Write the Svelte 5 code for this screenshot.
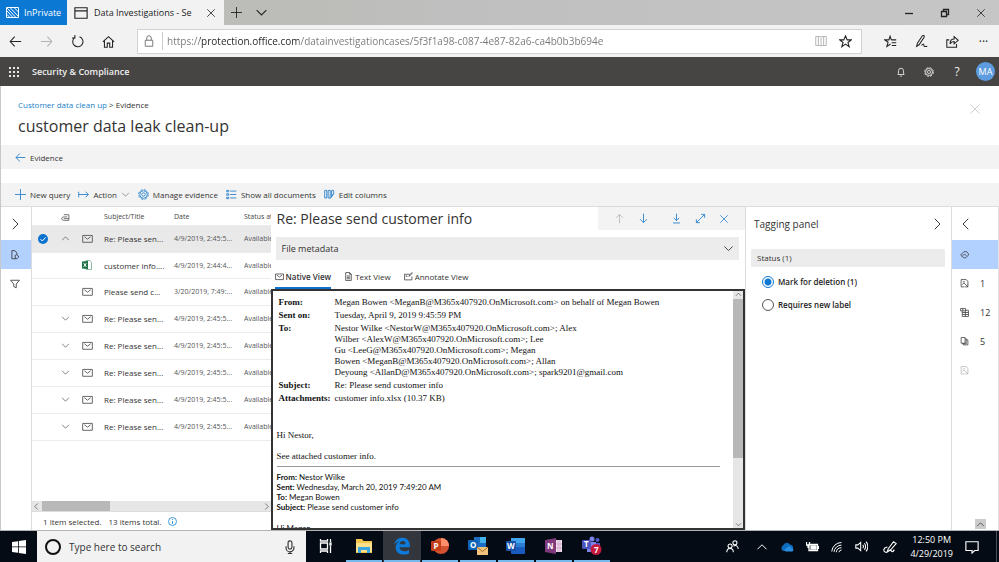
<script lang="ts">
	type Doc = {
		kind: 'mail' | 'excel';
		subject: string;
		date: string;
		expand?: 'up' | 'down';
	};

	const docs: Doc[] = [
		{ kind: 'mail', subject: 'Re: Please sen...', date: '4/9/2019, 2:45:5...', expand: 'up' },
		{ kind: 'excel', subject: 'customer info....', date: '4/9/2019, 2:44:4...' },
		{ kind: 'mail', subject: 'Please send c...', date: '3/20/2019, 7:49:...' },
		{ kind: 'mail', subject: 'Re: Please sen...', date: '4/9/2019, 2:45:5...', expand: 'down' },
		{ kind: 'mail', subject: 'Re: Please sen...', date: '4/9/2019, 2:45:5...', expand: 'down' },
		{ kind: 'mail', subject: 'Re: Please sen...', date: '4/9/2019, 2:45:5...', expand: 'down' },
		{ kind: 'mail', subject: 'Re: Please sen...', date: '4/9/2019, 2:45:5...', expand: 'down' },
		{ kind: 'mail', subject: 'Re: Please sen...', date: '4/9/2019, 2:45:5...', expand: 'down' }
	];

	const recipients = [
		'Nestor Wilke <NestorW@M365x407920.OnMicrosoft.com>; Alex',
		'Wilber <AlexW@M365x407920.OnMicrosoft.com>; Lee',
		'Gu <LeeG@M365x407920.OnMicrosoft.com>; Megan',
		'Bowen <MeganB@M365x407920.OnMicrosoft.com>; Allan',
		'Deyoung <AllanD@M365x407920.OnMicrosoft.com>; spark9201@gmail.com'
	];

	const views = [
		{ id: 'native', label: 'Native View', icon: 'mail' },
		{ id: 'text', label: 'Text View', icon: 'page' },
		{ id: 'annotate', label: 'Annotate View', icon: 'annotate' }
	];

	const panels = [
		{ id: 'tags', label: 'Tagging', icon: 'tag', count: '' },
		{ id: 'near', label: 'Searches', icon: 'inbox', count: '1' },
		{ id: 'family', label: 'Family', icon: 'tree', count: '12' },
		{ id: 'dupes', label: 'Duplicates', icon: 'copies', count: '5' },
		{ id: 'errors', label: 'Errors', icon: 'inbox', count: '' }
	];

	const tags = [
		{ id: 'deletion', label: 'Mark for deletion (1)' },
		{ id: 'label', label: 'Requires new label' }
	];

	// 16x16 outline icons
	const icons: Record<string, string> = {
		left: 'M15 8H1.5M7 2 1.5 8 7 14',
		right: 'M1 8h13.5M9 2l5.5 6L9 14',
		up: 'M8 15V2M3 7l5-5 5 5',
		down: 'M8 1v13M3 9l5 5 5-5',
		download: 'M8 1v10M4 7l4 4 4-4M3 14.5h10',
		diagonal: 'M2 14 14 2M9 2h5v5M2 9v5h5',
		close: 'M2 2l12 12M14 2 2 14',
		plus: 'M8 0v16M0 8h16',
		chevDown: 'M2 5l6 6 6-6',
		chevUp: 'M2 11l6-6 6 6',
		chevLeft: 'M11 1 4 8l7 7',
		chevRight: 'M5 1l7 7-7 7',
		reload: 'M4.5 3.2A6.3 6.3 0 1 0 10.5 2.2M4.8 0v3.6H1.2',
		home: 'M1 8.5 8 2l7 6.5M3 7v8h3.5v-5h3v5H13V7',
		lock: 'M3 7h10v8H3zM5 7V4a3 3 0 0 1 6 0v3',
		tab: 'M1 2h14v12H1zM1 5.5h14',
		book: 'M1 2h6l1 1 1-1h6v12H9l-1 1-1-1H1zM8 3v12M4.5 2v12M11.5 2v12',
		star: 'M8 1l2 5h5l-4 3.3 1.6 5.2L8 11.3l-4.6 3.2L5 9.3 1 6h5z',
		favs: 'M9 6 7.5 1.5 6 6H1l4 3-1.5 5L8 11M9 6h6M9.5 9.5H15M9.5 13H15',
		pen: 'M2 14l1-4 6-9c2-1 3 0 2 2l-6 9-3 2zM8 13c2-3 3-2 3 0s2 1 4 1',
		share: 'M4 6H1v9h12v-4M5 11c0-4 2-6 5-6V2l5 4.5L10 11V8c-2 0-4 1-5 3z',
		bell: 'M3 12c1-1 1-3 1-6a4 4 0 0 1 8 0c0 3 0 5 1 6zM6.5 14.5h3',
		action: 'M1 4v8M1 8h14M11 4l4 4-4 4',
		list: 'M1 2h3v2H1zM1 7h3v2H1zM1 12h3v2H1zM6 3h9M6 8h9M6 13h9',
		columns: 'M1 2h3v11H1zM6 2h3v11H6zM11 2h3v5l-3 4zM9 14l5-7',
		mail: 'M1 3.5h14v10H1zM3.5 5.5 8 9l4.5-3.5',
		page: 'M3 1h7l3 3v11H3zM10 1v3h3M5 7h6M5 9.5h6M5 12h6',
		annotate: 'M10 4H1v10h13V8M4 6v2h2M9 8l1-3 4-4 1 1-4 4z',
		clip: 'M5 3h9v10H5c-5 0-5-6 0-6h6M5 10h9',
		docFind: 'M9 14H3V1h5l3 4v2M8 9l3-2 3 4-3 3H9z',
		filter: 'M1 2h14L10 8v6l-4-2V8z',
		tag: 'M1 9 7 3h5l3 4v2l-5 5H7zM4 11l4-4 4 4',
		inbox: 'M14 10V4L11 1H2v13h6M5 5h4M4 10l3-3 7 7M9 14h5V9',
		tree: 'M1 1h9v4H1zM4 5v10h11V4h-5M4 8h11M4 11.5h11M9.5 5v10M5 1v4',
		copies: 'M2 1h7v10H2zM9 3h2v9H4M11 5h3v9H6v-2',
		mic: 'M8 1a2.2 2.2 0 0 0-2.2 2.2v5a2.2 2.2 0 0 0 4.4 0v-5A2.2 2.2 0 0 0 8 1zM3.5 7v2a4.5 4.5 0 0 0 9 0V7M8 13v2.5M5.5 15.5h5',
		people: 'M11 1a2.5 2.5 0 1 0 0 5 2.5 2.5 0 0 0 0-5zM5 5a2.5 2.5 0 1 0 0 5 2.5 2.5 0 0 0 0-5zM1 15c0-3 2-4.5 4-4.5S9 12 9 15M9 7.5c3-2 6 0 6 3.5',
		wifi: 'M1 14A13 13 0 0 1 14 2M4 14.5A10 10 0 0 1 14 5.5M7 15a7 7 0 0 1 7-6M10.5 15a4 4 0 0 1 3.5-3',
		speaker: 'M1 6h2.5L7 3v10l-3.5-3H1zM9.5 6c1 1 1 3 0 4M11.5 4c2 2 2 6 0 8M13.5 2c3 3 3 9 0 12',
		ink: 'M6 10l6-8 3 2-7 8-3 1zM5 8c-5 1-5 5-2 6s4-4 6-2 2 2 4-1',
		note: 'M1 2h14v10h-4l-3 3v-3H1z'
	};

	let activeView = $state('native');
	let activePanel = $state('tags');
	let selectedTag = $state('deletion');
	let selectedRow = $state(0);
	let address = $state(
		'https://protection.office.com/datainvestigationcases/5f3f1a98-c087-4e87-82a6-ca4b0b3b694e'
	);
	let search = $state('');
</script>

{#snippet icon(name: string, size = 11)}
	<svg class="icon" width={size} height={size} viewBox="0 0 16 16" aria-hidden="true">
		<path d={icons[name]} />
	</svg>
{/snippet}

{#snippet gear(size = 11)}
	<svg class="icon" width={size} height={size} viewBox="0 0 16 16" aria-hidden="true">
		<circle cx="8" cy="8" r="7" stroke-dasharray="3.5 2" />
		<circle cx="8" cy="8" r="5.5" />
		<circle cx="8" cy="8" r="2.5" />
	</svg>
{/snippet}

<div class="desktop">
	<div class="tabs">
		<span class="inprivate">
			<svg width="13" height="11" viewBox="0 0 13 11" aria-hidden="true">
				<path class="line" d="M.5.5h12v10H.5zM1 4l6 6.5M1 1l9 9.5M4 .5l8.5 9M8 .5 12.5 5M1 7.5l3 3" />
			</svg>
			InPrivate
		</span>
		<div class="tab">
			{@render icon('tab', 14)}
			<span class="tab-title">Data Investigations - Se</span>
			<button type="button" aria-label="Close tab">{@render icon('close', 10)}</button>
		</div>
		<button type="button" class="tab-tool" aria-label="New tab">{@render icon('plus', 11)}</button>
		<button type="button" class="tab-tool" aria-label="Tab list">{@render icon('chevDown', 13)}</button>
		<div class="window-buttons">
			<button type="button" aria-label="Minimize">
				<svg class="icon" width="10" height="10" viewBox="0 0 10 10"><path d="M1 5.5h8" /></svg>
			</button>
			<button type="button" aria-label="Restore">
				<svg class="icon" width="10" height="10" viewBox="0 0 10 10">
					<path d="M1.5 3.5h5v5h-5zM3.5 3V1.5h5v5H7" />
				</svg>
			</button>
			<button type="button" aria-label="Close">{@render icon('close', 10)}</button>
		</div>
	</div>

	<div class="navbar">
		<div class="nav-buttons">
			<button type="button" aria-label="Back">{@render icon('left', 13)}</button>
			<button type="button" aria-label="Forward" class="faded">{@render icon('right', 13)}</button>
			<button type="button" aria-label="Refresh">{@render icon('reload', 13)}</button>
			<button type="button" aria-label="Home">{@render icon('home', 13)}</button>
		</div>
		<div class="address">
			<span class="lock">{@render icon('lock', 12)}</span>
			<input type="text" aria-label="Address" bind:value={address} />
			<button type="button" aria-label="Reading view" class="faded">{@render icon('book', 12)}</button>
			<button type="button" aria-label="Add to favorites">{@render icon('star', 13)}</button>
		</div>
		<div class="nav-buttons end">
			<button type="button" aria-label="Favorites">{@render icon('favs', 13)}</button>
			<button type="button" aria-label="Add notes">{@render icon('pen', 13)}</button>
			<button type="button" aria-label="Share">{@render icon('share', 13)}</button>
			<button type="button" aria-label="More" class="more">···</button>
		</div>
	</div>

	<header class="suite">
		<button type="button" aria-label="App launcher">
			<svg width="10" height="10" viewBox="0 0 10 10" aria-hidden="true">
				{#each [0, 4, 8] as y}
					{#each [0, 4, 8] as x}
						<rect {x} {y} width="2" height="2" fill="#e6e6e6" />
					{/each}
				{/each}
			</svg>
		</button>
		<span class="suite-name">Security &amp; Compliance</span>
		<button type="button" aria-label="Notifications">{@render icon('bell', 10)}</button>
		<button type="button" aria-label="Settings">{@render gear(10)}</button>
		<button type="button" aria-label="Help" class="help">?</button>
		<button type="button" class="avatar">MA</button>
	</header>

	<main class="page">
		<div class="page-head">
			<div>
				<nav class="crumbs"><a href="#cases">Customer data clean up</a> &gt; Evidence</nav>
				<h1>customer data leak clean-up</h1>
			</div>
			<button type="button" class="dismiss" aria-label="Close case">{@render icon('close', 12)}</button>
		</div>

		<a class="bar back" href="#evidence">{@render icon('left')} <span>Evidence</span></a>

		<div class="bar commands">
			<button type="button">{@render icon('plus')} New query</button>
			<button type="button">{@render icon('action')} Action <span class="caret">{@render icon('chevDown', 9)}</span></button>
			<button type="button">{@render gear(11)} Manage evidence</button>
			<button type="button">{@render icon('list')} Show all documents</button>
			<button type="button">{@render icon('columns')} Edit columns</button>
		</div>

		<div class="workspace">
			<aside class="rail">
				<button type="button" aria-label="Expand">{@render icon('chevRight', 12)}</button>
				<button type="button" aria-label="Documents" class="active">{@render icon('docFind', 10)}</button>
				<button type="button" aria-label="Filters">{@render icon('filter', 10)}</button>
			</aside>

			<section class="list">
				<div class="grid">
					<table>
						<colgroup>
							<col class="c-check" />
							<col class="c-expand" />
							<col class="c-icon" />
							<col class="c-text" />
							<col class="c-text" />
							<col />
						</colgroup>
						<thead>
							<tr>
								<th></th>
								<th class="mid">{@render icon('clip', 9)}</th>
								<th></th>
								<th>Subject/Title</th>
								<th>Date</th>
								<th>Status at</th>
							</tr>
						</thead>
						<tbody>
							{#each docs as doc, i}
								<tr class:selected={i === selectedRow} class={doc.kind} onclick={() => (selectedRow = i)}>
									<td class="mid">
										{#if i === selectedRow}
											<svg width="10" height="10" viewBox="0 0 10 10">
												<circle cx="5" cy="5" r="5" fill="#0b72d0" />
												<path d="M2.5 5.2 4.3 7l3.3-3.6" fill="none" stroke="#fff" />
											</svg>
										{/if}
									</td>
									<td class="mid">
										{#if doc.expand}
											{@render icon(doc.expand === 'up' ? 'chevUp' : 'chevDown', 9)}
										{/if}
									</td>
									<td class="kind">
										{#if doc.kind === 'mail'}
											{@render icon('mail', 11)}
										{:else}
											<svg width="10" height="10" viewBox="0 0 10 10">
												<path d="M4 .5h4l1.5 2v7H4z" fill="#fff" stroke="#8fb8a0" />
												<path d="M0 1.5 6 1v8L0 8.5z" fill="#1e7145" />
												<path d="M1.7 3.2l2.6 3.6M4.3 3.2 1.7 6.8" stroke="#fff" fill="none" />
											</svg>
										{/if}
									</td>
									<td class="subject">{doc.subject}</td>
									<td>{doc.date}</td>
									<td>Available</td>
								</tr>
							{/each}
						</tbody>
					</table>
				</div>
				<div class="hscroll">
					{@render icon('chevLeft', 7)}
					<div class="track"><div class="thumb"></div></div>
					{@render icon('chevRight', 7)}
				</div>
				<p class="totals">
					<span>1 item selected.</span>
					<span>13 items total.</span>
					<svg class="info" width="9" height="9" viewBox="0 0 9 9">
						<circle cx="4.5" cy="4.5" r="4" />
						<path d="M4.5 4v3M4.5 2v1" />
					</svg>
				</p>
			</section>

			<section class="viewer">
				<div class="viewer-head">
					<h2>Re: Please send customer info</h2>
					<div class="viewer-tools">
						<button type="button" aria-label="Previous" disabled>{@render icon('up')}</button>
						<button type="button" aria-label="Next">{@render icon('down')}</button>
						<button type="button" aria-label="Download" class="apart">{@render icon('download')}</button>
						<button type="button" aria-label="Full screen">{@render icon('diagonal')}</button>
						<button type="button" aria-label="Close">{@render icon('close', 10)}</button>
					</div>
				</div>
				<button type="button" class="metadata">File metadata {@render icon('chevDown', 11)}</button>
				<div class="views" role="tablist">
					{#each views as view}
						<button
							type="button"
							role="tab"
							aria-selected={activeView === view.id}
							class:active={activeView === view.id}
							onclick={() => (activeView = view.id)}
						>
							{@render icon(view.icon, 9)}
							{view.label}
						</button>
					{/each}
				</div>
				<div class="message">
					<div class="message-body">
						<table class="headers">
							<tbody>
								<tr><th>From:</th><td>Megan Bowen &lt;MeganB@M365x407920.OnMicrosoft.com&gt; on behalf of Megan Bowen</td></tr>
								<tr><th>Sent on:</th><td>Tuesday, April 9, 2019 9:45:59 PM</td></tr>
								<tr>
									<th>To:</th>
									<td>{#each recipients as line}<div>{line}</div>{/each}</td>
								</tr>
								<tr><th>Subject:</th><td>Re: Please send customer info</td></tr>
								<tr><th>Attachments:</th><td>customer info.xlsx (10.37 KB)</td></tr>
							</tbody>
						</table>
						<p class="greeting">Hi Nestor,</p>
						<p>See attached customer info.</p>
						<hr />
						<div class="quoted">
							<b>From:</b> Nestor Wilke<br />
							<b>Sent:</b> Wednesday, March 20, 2019 7:49:20 AM<br />
							<b>To:</b> Megan Bowen<br />
							<b>Subject:</b> Please send customer info
							<p>Hi Megan,</p>
						</div>
					</div>
					<div class="vscroll">
						{@render icon('chevUp', 7)}
						<div class="track"><div class="thumb"></div></div>
						{@render icon('chevDown', 7)}
					</div>
				</div>
			</section>

			<section class="tagging">
				<div class="tagging-head">
					<h3>Tagging panel</h3>
					<button type="button" aria-label="Collapse">{@render icon('chevRight', 12)}</button>
				</div>
				<fieldset>
					<legend>Status (1)</legend>
					{#each tags as tag}
						<label><input type="radio" name="status" value={tag.id} bind:group={selectedTag} />{tag.label}</label>
					{/each}
				</fieldset>
			</section>

			<aside class="rail wide">
				<button type="button" aria-label="Collapse panel">{@render icon('chevLeft', 12)}</button>
				{#each panels as panel}
					<button
						type="button"
						aria-label={panel.label}
						class:active={activePanel === panel.id}
						class:faded={panel.id === 'errors'}
						onclick={() => (activePanel = panel.id)}
					>
						{@render icon(panel.icon, 9)}
						<span>{panel.count}</span>
					</button>
				{/each}
				<button type="button" class="to-top" aria-label="Scroll to top">{@render icon('chevUp', 9)}</button>
			</aside>
		</div>
	</main>

	<footer class="taskbar">
		<button type="button" class="start" aria-label="Start">
			<svg width="14" height="14" viewBox="0 0 14 14" fill="#fff">
				<path d="M0 2 6 1.2v5.3H0zM6.8 1.1 14 0v6.5H6.8zM0 7.3h6v5.4L0 11.9zM6.8 7.3H14V14l-7.2-1.1z" />
			</svg>
		</button>
		<div class="search">
			<svg width="18" height="18" viewBox="0 0 18 18"><circle cx="9" cy="9" r="7" fill="none" stroke="#111" stroke-width="2" /></svg>
			<input type="text" placeholder="Type here to search" aria-label="Search" bind:value={search} />
			{@render icon('mic', 14)}
		</div>
		<div class="apps">
			<button type="button" aria-label="Task view">
				<svg class="icon" width="16" height="16" viewBox="0 0 16 16">
					<path d="M2.5 5h7v6h-7zM2.5 1v2h7V1M2.5 15v-2h7v2M12.5 1v3M12.5 8v7" />
					<path d="M12 5h1v2h-1z" fill="currentColor" />
				</svg>
			</button>
			<button type="button" aria-label="File Explorer" class="open">
				<svg width="18" height="16" viewBox="0 0 18 16">
					<path d="M1 1h6l1.5 2H17v12H1z" fill="#f3c64b" />
					<path d="M1 5h16v9H1z" fill="#ffe08a" />
					<path d="M3 15V9h12v6h-3v-3H6v3z" fill="#38a6e0" />
				</svg>
			</button>
			<button type="button" aria-label="Edge" class="open current">
				<svg width="18" height="18" viewBox="0 0 18 18">
					<path
						d="M1.2 8C2 3 5.2.8 9.3.8c5 0 7.5 3.4 7.5 7.7v1.8H6.5c.2 2.7 2.4 3.9 5 3.9 1.7 0 3.2-.5 4.5-1.3v3.5c-1.6.8-3.3 1.2-5.3 1.2-4.8 0-8-2.6-8-7 0-3 1.6-5.3 4-6.5C4 4.7 2.3 6 1.2 8zm5.3-.7h6c0-2-.9-3.2-2.8-3.2-1.8 0-2.9 1.3-3.2 3.2z"
						fill="#0c7bdc"
					/>
				</svg>
			</button>
			<button type="button" aria-label="PowerPoint" class="open">
				<svg width="20" height="18" viewBox="0 0 20 18">
					<circle cx="11" cy="9" r="8" fill="#d35230" />
					<path d="M11 1a8 8 0 0 1 8 8h-8z" fill="#ff8f6b" />
					<rect x="1" y="4" width="10" height="10" rx="1" fill="#c43e1c" />
					<text x="3.5" y="12">P</text>
				</svg>
			</button>
			<button type="button" aria-label="Outlook" class="open">
				<svg width="20" height="18" viewBox="0 0 20 18">
					<path d="M6 0h12v13H6z" fill="#1a6fc4" />
					<path d="M12 0h6v6h-6z" fill="#41b2ec" />
					<rect x="0" y="3" width="10" height="10" rx="1" fill="#0f64b8" />
					<text x="2" y="11">O</text>
					<path d="M9 10h11v8H9z" fill="#f0c27b" />
					<path d="M9 10l5.5 4.5L20 10" fill="none" stroke="#a06a20" />
				</svg>
			</button>
			<button type="button" aria-label="Word" class="open">
				<svg width="20" height="18" viewBox="0 0 20 18">
					<rect x="5" y="1" width="14" height="16" rx="1" fill="#185abd" />
					<path d="M5 1h14v5H5z" fill="#41a5ee" />
					<path d="M5 6h14v4H5z" fill="#2b7cd3" />
					<rect x="0" y="4" width="10" height="10" rx="1" fill="#1651aa" />
					<text x="1" y="12">W</text>
				</svg>
			</button>
			<button type="button" aria-label="OneNote" class="open">
				<svg width="18" height="16" viewBox="0 0 18 16">
					<path d="M10 2h7v12h-7z" fill="#f4e4f2" />
					<path d="M13 2v12M15 2v12M10 6h7M10 10h7" stroke="#d3a9cf" fill="none" />
					<path d="M0 2 11 0v16L0 14z" fill="#80397b" />
					<text x="2" y="11">N</text>
				</svg>
			</button>
			<button type="button" aria-label="Teams" class="open">
				<svg width="22" height="20" viewBox="0 0 22 20">
					<circle cx="11" cy="3" r="2.5" fill="#7b83eb" />
					<circle cx="16.5" cy="4" r="2" fill="#5059c9" />
					<path d="M6 6h9v10H6z" fill="#7b83eb" />
					<path d="M15 7h4v7h-4z" fill="#5059c9" />
					<rect x="1" y="4" width="9" height="9" rx="1" fill="#4b53bc" />
					<text x="3" y="11">T</text>
					<circle cx="15" cy="13.5" r="5.5" fill="#c4183c" />
					<text x="13" y="17">7</text>
				</svg>
			</button>
		</div>
		<div class="tray">
			<span class="people">{@render icon('people', 13)}</span>
			{@render icon('chevUp', 12)}
			<svg width="14" height="10" viewBox="0 0 14 10">
				<path d="M3.5 9a3 3 0 0 1-.5-5.5A4 4 0 0 1 10 2.5a3.5 3.5 0 0 1 1.5 6.5z" fill="#0f6cbd" />
				<path d="M6 9.5c-2 0-1.8-3 .5-3C7.5 4 11 4 11.5 6.2c2.5 0 2.5 3.3 0 3.3z" fill="#2a8ee0" />
			</svg>
			<svg class="icon" width="13" height="11" viewBox="0 0 13 11">
				<path d="M3 3.5h8.5v6H3zM12.5 5v3M.5 1v3h3V1M2 4v3" />
				<path d="M5 5h5v3H5z" fill="currentColor" />
			</svg>
			{@render icon('wifi', 12)}
			{@render icon('speaker', 13)}
			<span class="ink">{@render icon('ink', 14)}</span>
			<time><span>12:50 PM</span><span>4/29/2019</span></time>
			{@render icon('note', 14)}
		</div>
	</footer>
</div>

<style>
	:global(body) {
		font-family: 'Open Sans', 'Noto Sans', sans-serif;
		font-size: 8px;
		margin: 0;
		background: #fff;
		color: #333;
	}

	.desktop {
		display: flex;
		flex-direction: column;
		height: 100vh;
		overflow: hidden;
		white-space: nowrap;
	}

	button {
		display: flex;
		align-items: center;
		justify-content: center;
		margin: 0;
		padding: 0;
		border: none;
		background: none;
		color: inherit;
		font: inherit;
		cursor: pointer;
	}

	h1,
	h2,
	h3,
	p {
		margin: 0;
		font-weight: 400;
	}

	a {
		color: #1a7fc9;
		text-decoration: none;
	}

	svg {
		flex: none;
	}

	.icon {
		fill: none;
		stroke: currentColor;
		stroke-width: 1.3;
	}

	.line {
		fill: none;
		stroke: #fff;
	}

	.faded {
		color: #b4b4b4;
	}

	/* browser chrome */
	.tabs {
		display: flex;
		flex: none;
		height: 25px;
		background: linear-gradient(90deg, #bcbcb8 30%, #bfbfbf 45%, #c6c6c6);
		color: #222;
	}

	.inprivate {
		display: flex;
		align-items: center;
		gap: 5px;
		width: 61px;
		padding-left: 6px;
		background: #0b78d4;
		color: #fff;
		font-size: 9px;
	}

	.tab {
		display: flex;
		align-items: center;
		gap: 6px;
		padding: 0 8px 0 7px;
		background: #f2f2f2;
		font-size: 9px;
	}

	.tab-title {
		width: 106px;
	}

	.tab-tool {
		width: 25px;
	}

	.window-buttons {
		display: flex;
		margin-left: auto;
	}

	.window-buttons button {
		width: 36px;
	}

	.navbar {
		display: flex;
		flex: none;
		align-items: center;
		height: 32px;
		background: #f2f2f2;
		color: #222;
	}

	.nav-buttons {
		display: flex;
	}

	.nav-buttons button {
		width: 31px;
	}

	.nav-buttons.end {
		margin-left: 13px;
	}

	.more {
		font-size: 12px;
	}

	.address {
		display: flex;
		flex: 1;
		align-items: center;
		gap: 12px;
		height: 23px;
		margin-left: 13px;
		padding-right: 9px;
		border: 1px solid #d2d2d2;
		background: #fff;
	}

	.lock {
		display: flex;
		padding: 3px 7px 3px 5px;
		border-right: 1px solid #ccc;
		color: #777;
	}

	/* the host part of the address is drawn darker than the rest */
	.address input {
		flex: 1;
		min-width: 0;
		margin-left: -8px;
		padding: 0;
		border: none;
		outline: none;
		background: linear-gradient(90deg, #767676 33px, #222 33px 132px, #767676 132px);
		background-clip: text;
		color: transparent;
		font: inherit;
		font-size: 10px;
	}

	/* suite header */
	.suite {
		display: flex;
		flex: none;
		align-items: center;
		height: 29px;
		padding: 0 4px 0 9px;
		background: #464543;
		color: #f0f0f0;
	}

	.suite-name {
		flex: 1;
		padding-left: 13px;
		font-size: 9px;
		font-weight: 600;
	}

	.suite > button:not(:first-child) {
		width: 28px;
	}

	.help {
		font-size: 12px;
	}

	.suite > .avatar.avatar {
		width: 19px;
		height: 19px;
		margin-left: 5px;
		border-radius: 50%;
		background: #5e9ce0;
		color: #fff;
		font-size: 9px;
	}

	/* page */
	.page {
		display: flex;
		flex: 1;
		flex-direction: column;
		min-height: 0;
		border-left: 1px solid #c8c8c8;
	}

	.page-head {
		display: flex;
		flex: none;
		justify-content: space-between;
		height: 59px;
		padding: 0 18px 0 17px;
	}

	.crumbs {
		padding-top: 13px;
		line-height: 12px;
	}

	h1 {
		margin-top: 4px;
		font-size: 16px;
		line-height: 22px;
	}

	.dismiss {
		align-self: flex-start;
		margin-top: 17px;
		color: #ccc;
	}

	.bar {
		display: flex;
		flex: none;
		align-items: center;
		box-sizing: border-box;
		height: 24px;
		padding-left: 14px;
		background: #f3f3f3;
		color: #333;
	}

	.bar .icon {
		color: #2a82cc;
	}

	.back {
		gap: 4px;
		margin-bottom: 14px;
	}

	.commands {
		gap: 8px;
		border-bottom: 1px solid #dcdcdc;
	}

	.commands button {
		gap: 4px;
	}

	.commands .caret .icon {
		display: block;
		color: #777;
	}

	.workspace {
		display: flex;
		flex: 1;
		min-height: 0;
	}

	.rail {
		display: flex;
		flex: none;
		flex-direction: column;
		width: 30px;
	}

	.rail button {
		height: 29px;
		padding-right: 3px;
	}

	.rail button:first-child {
		height: 33px;
	}

	.rail .active {
		background: #b3d1ff;
	}

	.rail.wide {
		width: 46px;
		border-left: 1px solid #dcdcdc;
		border-right: 1px solid #e2e2e2;
		font-size: 9px;
	}

	.rail.wide button {
		justify-content: flex-start;
		gap: 11px;
		padding-left: 8px;
	}

	.rail.wide .to-top {
		justify-content: center;
		width: 11px;
		height: 10px;
		margin: auto 12px 1px auto;
		padding: 0;
		background: #ccc;
	}

	/* document list */
	.list {
		display: flex;
		flex: none;
		flex-direction: column;
		width: 24%;
		border-left: 1px solid #dcdcdc;
		box-sizing: border-box;
	}

	.grid {
		flex: 1;
		min-height: 0;
		overflow: hidden;
	}

	.grid table {
		width: 100%;
		table-layout: fixed;
		border-collapse: collapse;
	}

	.grid .c-check {
		width: 22px;
	}

	.grid .c-expand {
		width: 22px;
	}

	.grid .c-icon {
		width: 28px;
	}

	.grid .c-text {
		width: 70px;
	}

	.grid th,
	.grid td {
		box-sizing: border-box;
		height: 27px;
		padding: 0;
		border-bottom: 1px solid #ececec;
		font-size: 7px;
		font-weight: 400;
		text-align: left;
		color: #555;
		overflow: hidden;
	}

	.grid th {
		height: 18px;
		padding-top: 2px;
		color: #444;
	}

	.grid td.subject {
		font-size: 8px;
		color: #333;
	}

	.grid .excel td {
		height: 26px;
	}

	.grid .selected td {
		background: #e9e9e9;
	}

	.grid .mid {
		text-align: center;
	}

	.grid td svg,
	.grid th svg {
		vertical-align: middle;
	}

	.grid .kind {
		padding-left: 6px;
	}

	.hscroll {
		display: flex;
		align-items: center;
		gap: 2px;
		height: 10px;
		padding: 0 1px;
		border-bottom: 1px solid #dcdcdc;
		background: #e6e6e6;
	}

	.track {
		flex: 1;
	}

	.hscroll .thumb {
		width: 31%;
		height: 10px;
		background: #b8b8b8;
	}

	.totals {
		display: flex;
		align-items: center;
		gap: 7px;
		height: 18px;
		padding-left: 11px;
	}

	.info {
		fill: none;
		stroke: #3c9be0;
	}

	/* message viewer */
	.viewer {
		display: flex;
		flex: 1;
		flex-direction: column;
		min-width: 0;
		border-right: 1px solid #dcdcdc;
	}

	.viewer-head {
		display: flex;
		justify-content: space-between;
		padding-left: 6px;
	}

	h2 {
		font-size: 14px;
		line-height: 23px;
	}

	.viewer-tools {
		display: flex;
		height: 23px;
		padding: 0 9px;
		background: #f3f3f3;
		color: #2a82cc;
	}

	.viewer-tools button {
		width: 24px;
	}

	.viewer-tools .apart {
		margin-left: 9px;
	}

	.viewer-tools button:disabled {
		color: #b8b8b8;
	}

	.metadata {
		justify-content: space-between;
		height: 23px;
		margin: 7px 6px 0 5px;
		padding: 0 5px 0 6px;
		background: #ececec;
		font-size: 9px;
	}

	.views {
		display: flex;
		gap: 13px;
		margin-top: 6px;
		padding-left: 4px;
	}

	.views button {
		gap: 2px;
		height: 23px;
		border-bottom: 2px solid transparent;
	}

	.views .active {
		border-color: #0b72d0;
		font-weight: 600;
	}

	.message {
		display: flex;
		flex: 1;
		min-height: 0;
		border: 2px solid #333;
	}

	.message-body {
		flex: 1;
		min-width: 0;
		padding: 5px 13px 0 4px;
		overflow: hidden;
		color: #111;
		font-family: 'Liberation Serif', serif;
		font-size: 9px;
	}

	.headers {
		border-spacing: 0;
		font-size: inherit;
		line-height: 11px;
	}

	.headers th,
	.headers td {
		padding: 1px 2px;
		text-align: left;
		vertical-align: top;
	}

	.message-body p {
		line-height: 11px;
	}

	.message-body .greeting {
		margin: 25px 0 10px;
	}

	hr {
		margin: 4px 0 5px;
		border: none;
		border-top: 1px solid #999;
	}

	.quoted {
		font-family: Lato, sans-serif;
		font-size: 8px;
		line-height: 10px;
	}

	.message-body .quoted p {
		margin-top: 11px;
	}

	.vscroll {
		display: flex;
		flex-direction: column;
		align-items: center;
		gap: 1px;
		width: 10px;
		background: #e6e6e6;
	}

	.vscroll .track {
		align-self: stretch;
	}

	.vscroll .thumb {
		height: 72%;
		background: #b8b8b8;
	}

	/* tagging panel */
	.tagging {
		flex: none;
		width: 205px;
		padding: 7px 6px 0 5px;
		box-sizing: border-box;
	}

	.tagging-head {
		display: flex;
		align-items: center;
		justify-content: space-between;
		height: 20px;
		padding: 0 2px 0 3px;
	}

	h3 {
		font-size: 10px;
	}

	fieldset {
		min-width: 0;
		margin: 15px 0 0;
		padding: 0;
		border: none;
	}

	legend {
		box-sizing: border-box;
		width: 100%;
		height: 18px;
		margin-bottom: 3px;
		padding: 0 6px;
		background: #ececec;
		line-height: 18px;
	}

	label {
		display: flex;
		align-items: center;
		gap: 4px;
		height: 23px;
		padding-left: 11px;
		font-size: 8px;
		font-weight: 600;
		color: #222;
	}

	input[type='radio'] {
		appearance: none;
		box-sizing: border-box;
		width: 12px;
		height: 12px;
		margin: 0;
		border: 1px solid #555;
		border-radius: 50%;
	}

	input[type='radio']:checked {
		border-color: #0b78d4;
		background: radial-gradient(circle, #0b78d4 3px, transparent 4px);
	}

	/* taskbar */
	.taskbar {
		display: flex;
		flex: none;
		height: 31px;
		background: #040b14;
		border-top: 1px solid #b4b4b4;
		color: #fff;
	}

	.start {
		width: 37px;
	}

	.search {
		display: flex;
		align-items: center;
		gap: 7px;
		flex: 0 1 269px;
		box-sizing: border-box;
		padding: 0 9px 0 7px;
		background: #f2f2f2;
		color: #333;
	}

	.search input {
		flex: 1;
		min-width: 0;
		padding: 0;
		border: none;
		outline: none;
		background: none;
		font: inherit;
		font-size: 10px;
	}

	.search input::placeholder {
		color: #333;
		opacity: 1;
	}

	.apps {
		display: flex;
		padding-left: 1px;
	}

	.apps button {
		width: 38px;
		border-bottom: 2px solid transparent;
	}

	.apps .open {
		border-image: linear-gradient(90deg, transparent 3px, #76b9ed 3px 35px, transparent 35px) 2;
	}

	.apps .current {
		background: #33373d;
	}

	.apps text {
		fill: #fff;
		font-size: 8px;
		font-weight: 700;
	}

	.tray {
		display: flex;
		align-items: center;
		gap: 12px;
		margin: 0 2px 0 auto;
		padding-right: 17px;
		border-right: 1px solid #4a4f57;
	}

	.people,
	.ink {
		display: flex;
	}

	.people {
		margin-right: 5px;
	}

	.ink {
		margin: 0 1px 0 3px;
	}

	time {
		display: flex;
		flex-direction: column;
		align-items: center;
		font-size: 9px;
		line-height: 14px;
	}
</style>
